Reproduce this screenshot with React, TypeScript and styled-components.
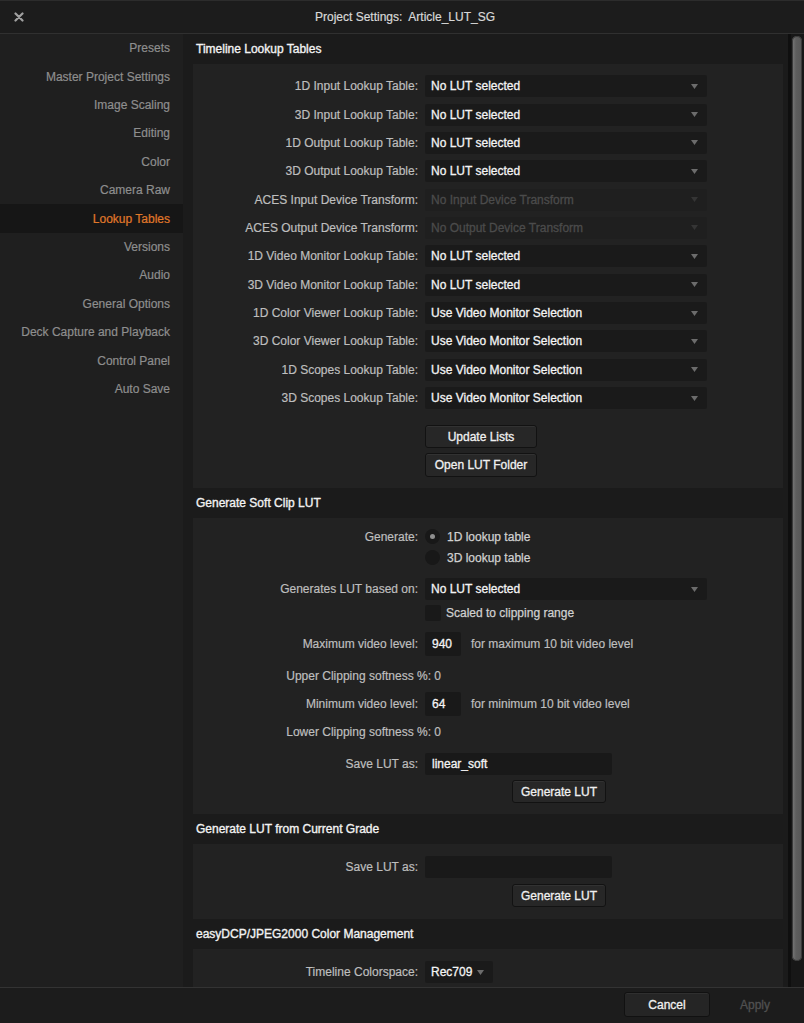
import React from 'react';
import styled, { createGlobalStyle } from 'styled-components';

const GlobalStyle = createGlobalStyle`
  html, body { margin: 0; padding: 0; background: #1b1b1b; }
  body { font-family: "Liberation Sans", Arial, Helvetica, sans-serif; font-size: 12px; }
  * { box-sizing: border-box; }
`;

const Window = styled.div`
  width: 804px;
  height: 1023px;
  display: flex;
  flex-direction: column;
  background: #1b1b1b;
  overflow: hidden;
  color: #bdbdbd;
`;

const TitleBar = styled.div`
  height: 34px;
  flex: none;
  display: grid;
  grid-template-columns: 40px 1fr 40px;
  align-items: center;
  background: #1c1c1c;
  border-top: 1px solid #2c2c2c;
  border-bottom: 1px solid #303030;
`;

const CloseButton = styled.div`
  display: flex;
  align-items: center;
  justify-content: center;
  width: 40px;
  height: 100%;
  padding-right: 2px;
`;

const Title = styled.div`
  text-align: center;
  color: #d8d8d8;
  white-space: pre;
  padding-left: 6px;
  -webkit-text-stroke: 0.2px #d8d8d8;
`;

const Body = styled.div`
  flex: 1;
  min-height: 0;
  display: flex;
`;

const Sidebar = styled.nav`
  width: 183px;
  flex: none;
  background: #1f1f1f;
  display: flex;
  flex-direction: column;
`;

const NavItem = styled.div<{ $active?: boolean }>`
  height: 28.42px;
  flex: none;
  display: flex;
  align-items: center;
  justify-content: flex-end;
  padding-right: 13px;
  color: ${(p) => (p.$active ? '#e0782a' : '#8e8e8e')};
  background: ${(p) => (p.$active ? '#161616' : 'transparent')};
  -webkit-text-stroke: 0.2px ${(p) => (p.$active ? '#e0782a' : '#8e8e8e')};
`;

const Main = styled.div`
  flex: 1;
  min-width: 0;
  display: flex;
  background: #1b1b1b;
`;

const Content = styled.div`
  flex: 1;
  min-width: 0;
  overflow: hidden;
  padding: 0 5px 0 10px;
`;

const ScrollTrack = styled.div`
  width: 16px;
  flex: none;
  background: #171717;
  border-left: 3px solid #0f0f0f;
  padding: 2px 2px 0 1px;
`;

const ScrollThumb = styled.div`
  width: 10px;
  height: 925px;
  border-radius: 5px;
  background: linear-gradient(to right, #7a7a7a, #5e5e5e 40%, #565656);
  box-shadow: inset 0 0 0 1px #3a3a3a;
`;

const SectionHeader = styled.div`
  height: 30px;
  display: flex;
  align-items: center;
  padding-left: 3px;
  color: #f2f2f2;
  -webkit-text-stroke: 0.35px #f2f2f2;
`;

const SectionBox = styled.div<{ $pt: number; $pb: number }>`
  background: #222222;
  padding: ${(p) => p.$pt}px 0 ${(p) => p.$pb}px;
  display: flex;
  flex-direction: column;
`;

const FormRow = styled.div<{ $h: number; $mt?: number }>`
  height: ${(p) => p.$h}px;
  margin-top: ${(p) => p.$mt ?? 0}px;
  flex: none;
  display: grid;
  grid-template-columns: 225px 1fr;
  column-gap: 7px;
  align-items: center;
`;

const Label = styled.div`
  text-align: right;
  white-space: nowrap;
  color: #bebebe;
  -webkit-text-stroke: 0.2px #bebebe;
`;

const WideLabel = styled(Label)`
  margin-right: -23px;
  position: relative;
`;

const Controls = styled.div`
  display: flex;
  align-items: center;
  min-width: 0;
`;

const SelectBox = styled.div<{ $w: number; $disabled?: boolean }>`
  width: ${(p) => p.$w}px;
  height: 22px;
  display: flex;
  align-items: center;
  justify-content: space-between;
  padding: 0 9px 0 6px;
  border-radius: 2px;
  background: ${(p) => (p.$disabled ? '#1f1f1f' : '#1a1a1a')};
  color: ${(p) => (p.$disabled ? '#4b4b4b' : '#f4f4f4')};
  -webkit-text-stroke: 0.3px ${(p) => (p.$disabled ? '#4b4b4b' : '#f4f4f4')};
  white-space: nowrap;
`;

const ArrowSvg = styled.svg<{ $disabled?: boolean }>`
  flex: none;
  fill: ${(p) => (p.$disabled ? '#353535' : '#6c6c6c')};
`;

const Arrow = ({ disabled }: { disabled?: boolean }) => (
  <ArrowSvg $disabled={disabled} width="7" height="5" viewBox="0 0 7 5">
    <polygon points="0,0 7,0 3.5,5" />
  </ArrowSvg>
);

const TextInput = styled.div<{ $w: number; $h: number }>`
  width: ${(p) => p.$w}px;
  height: ${(p) => p.$h}px;
  display: flex;
  align-items: center;
  padding: 0 7px;
  border-radius: 2px;
  background: #191919;
  color: #f4f4f4;
  -webkit-text-stroke: 0.3px #f4f4f4;
`;

const Hint = styled.span`
  margin-left: 10px;
  color: #bebebe;
  -webkit-text-stroke: 0.2px #bebebe;
  white-space: nowrap;
`;

const Button = styled.div<{ $w: number; $h: number }>`
  width: ${(p) => p.$w}px;
  height: ${(p) => p.$h}px;
  display: flex;
  align-items: center;
  justify-content: center;
  border-radius: 3px;
  background: #272727;
  border: 1px solid #121212;
  box-shadow: inset 0 1px 0 #323232;
  color: #f0f0f0;
  -webkit-text-stroke: 0.3px #f0f0f0;
  white-space: nowrap;
`;

const ButtonStack = styled.div`
  margin-top: 12.7px;
  display: flex;
  flex-direction: column;
  gap: 5px;
  padding-left: 232px;
`;

const ButtonRow = styled.div<{ $mt: number; $indent: number }>`
  margin-top: ${(p) => p.$mt}px;
  padding-left: ${(p) => p.$indent}px;
  display: flex;
`;

const Option = styled.div<{ $gap: number }>`
  display: flex;
  align-items: center;
  gap: ${(p) => p.$gap}px;
  color: #d0d0d0;
  -webkit-text-stroke: 0.25px #d0d0d0;
`;

const Radio = styled.span<{ $on?: boolean }>`
  width: 15px;
  height: 15px;
  border-radius: 50%;
  background: #181818;
  display: flex;
  align-items: center;
  justify-content: center;
  &::after {
    content: '';
    width: 5px;
    height: 5px;
    border-radius: 50%;
    background: ${(p) => (p.$on ? '#8e8e8e' : 'transparent')};
  }
`;

const Checkbox = styled.span`
  width: 16px;
  height: 16px;
  border-radius: 2px;
  background: #191919;
`;

const Footer = styled.div`
  height: 36px;
  flex: none;
  border-top: 1px solid #333333;
  background: #1c1c1c;
  display: flex;
  align-items: center;
  justify-content: flex-end;
  gap: 10px;
  padding-right: 14px;
  padding-bottom: 2px;
`;

const FooterButton = styled.div<{ $disabled?: boolean }>`
  width: ${(p) => (p.$disabled ? 70 : 86)}px;
  height: 25px;
  display: flex;
  align-items: center;
  justify-content: center;
  border-radius: 3px;
  background: ${(p) => (p.$disabled ? 'transparent' : '#252525')};
  border: 1px solid ${(p) => (p.$disabled ? 'transparent' : '#111111')};
  box-shadow: ${(p) => (p.$disabled ? 'none' : 'inset 0 1px 0 #2f2f2f')};
  color: ${(p) => (p.$disabled ? '#505050' : '#f0f0f0')};
  -webkit-text-stroke: 0.3px ${(p) => (p.$disabled ? '#505050' : '#f0f0f0')};
`;

const sidebarItems = [
  'Presets',
  'Master Project Settings',
  'Image Scaling',
  'Editing',
  'Color',
  'Camera Raw',
  'Lookup Tables',
  'Versions',
  'Audio',
  'General Options',
  'Deck Capture and Playback',
  'Control Panel',
  'Auto Save',
];

const lutRows: { label: string; value: string; disabled?: boolean }[] = [
  { label: '1D Input Lookup Table:', value: 'No LUT selected' },
  { label: '3D Input Lookup Table:', value: 'No LUT selected' },
  { label: '1D Output Lookup Table:', value: 'No LUT selected' },
  { label: '3D Output Lookup Table:', value: 'No LUT selected' },
  { label: 'ACES Input Device Transform:', value: 'No Input Device Transform', disabled: true },
  { label: 'ACES Output Device Transform:', value: 'No Output Device Transform', disabled: true },
  { label: '1D Video Monitor Lookup Table:', value: 'No LUT selected' },
  { label: '3D Video Monitor Lookup Table:', value: 'No LUT selected' },
  { label: '1D Color Viewer Lookup Table:', value: 'Use Video Monitor Selection' },
  { label: '3D Color Viewer Lookup Table:', value: 'Use Video Monitor Selection' },
  { label: '1D Scopes Lookup Table:', value: 'Use Video Monitor Selection' },
  { label: '3D Scopes Lookup Table:', value: 'Use Video Monitor Selection' },
];

const Select = ({ value, width, disabled }: { value: string; width: number; disabled?: boolean }) => (
  <SelectBox $w={width} $disabled={disabled}>
    <span>{value}</span>
    <Arrow disabled={disabled} />
  </SelectBox>
);

export default function App() {
  return (
    <>
      <GlobalStyle />
      <Window>
        <TitleBar>
          <CloseButton>
            <svg width="10" height="10" viewBox="0 0 10 10">
              <path d="M1.5 1.5 L8.5 8.5 M8.5 1.5 L1.5 8.5" stroke="#a0a0a0" strokeWidth="2.2" strokeLinecap="round" />
            </svg>
          </CloseButton>
          <Title>{'Project Settings:  Article_LUT_SG'}</Title>
          <div />
        </TitleBar>
        <Body>
          <Sidebar>
            {sidebarItems.map((item) => (
              <NavItem key={item} $active={item === 'Lookup Tables'}>
                {item}
              </NavItem>
            ))}
          </Sidebar>
          <Main>
            <Content>
              <SectionHeader>Timeline Lookup Tables</SectionHeader>
              <SectionBox $pt={8} $pb={11}>
                {lutRows.map((r) => (
                  <FormRow key={r.label} $h={28.36}>
                    <Label>{r.label}</Label>
                    <Controls>
                      <Select value={r.value} width={282} disabled={r.disabled} />
                    </Controls>
                  </FormRow>
                ))}
                <ButtonStack>
                  <Button $w={112} $h={23}>Update Lists</Button>
                  <Button $w={112} $h={24}>Open LUT Folder</Button>
                </ButtonStack>
              </SectionBox>

              <SectionHeader>Generate Soft Clip LUT</SectionHeader>
              <SectionBox $pt={8} $pb={11}>
                <FormRow $h={21}>
                  <Label>Generate:</Label>
                  <Controls>
                    <Option $gap={7}>
                      <Radio $on />
                      1D lookup table
                    </Option>
                  </Controls>
                </FormRow>
                <FormRow $h={21}>
                  <span />
                  <Controls>
                    <Option $gap={7}>
                      <Radio />
                      3D lookup table
                    </Option>
                  </Controls>
                </FormRow>
                <FormRow $h={22} $mt={10}>
                  <Label>Generates LUT based on:</Label>
                  <Controls>
                    <Select value="No LUT selected" width={282} />
                  </Controls>
                </FormRow>
                <FormRow $h={16} $mt={5}>
                  <span />
                  <Controls>
                    <Option $gap={5}>
                      <Checkbox />
                      Scaled to clipping range
                    </Option>
                  </Controls>
                </FormRow>
                <FormRow $h={24} $mt={11}>
                  <Label>Maximum video level:</Label>
                  <Controls>
                    <TextInput $w={36} $h={24}>940</TextInput>
                    <Hint>for maximum 10 bit video level</Hint>
                  </Controls>
                </FormRow>
                <FormRow $h={20} $mt={10}>
                  <WideLabel>Upper Clipping softness %: 0</WideLabel>
                  <span />
                </FormRow>
                <FormRow $h={24} $mt={6}>
                  <Label>Minimum video level:</Label>
                  <Controls>
                    <TextInput $w={36} $h={24}>64</TextInput>
                    <Hint>for minimum 10 bit video level</Hint>
                  </Controls>
                </FormRow>
                <FormRow $h={20} $mt={6}>
                  <WideLabel>Lower Clipping softness %: 0</WideLabel>
                  <span />
                </FormRow>
                <FormRow $h={22} $mt={11}>
                  <Label>Save LUT as:</Label>
                  <Controls>
                    <TextInput $w={187} $h={22}>linear_soft</TextInput>
                  </Controls>
                </FormRow>
                <ButtonRow $mt={5} $indent={319}>
                  <Button $w={94} $h={23}>Generate LUT</Button>
                </ButtonRow>
              </SectionBox>

              <SectionHeader>Generate LUT from Current Grade</SectionHeader>
              <SectionBox $pt={12} $pb={12}>
                <FormRow $h={22}>
                  <Label>Save LUT as:</Label>
                  <Controls>
                    <TextInput $w={187} $h={22} />
                  </Controls>
                </FormRow>
                <ButtonRow $mt={6} $indent={319}>
                  <Button $w={94} $h={23}>Generate LUT</Button>
                </ButtonRow>
              </SectionBox>

              <SectionHeader>easyDCP/JPEG2000 Color Management</SectionHeader>
              <SectionBox $pt={12} $pb={10}>
                <FormRow $h={22}>
                  <Label>Timeline Colorspace:</Label>
                  <Controls>
                    <Select value="Rec709" width={68} />
                  </Controls>
                </FormRow>
              </SectionBox>
            </Content>
            <ScrollTrack>
              <ScrollThumb />
            </ScrollTrack>
          </Main>
        </Body>
        <Footer>
          <FooterButton>Cancel</FooterButton>
          <FooterButton $disabled>Apply</FooterButton>
        </Footer>
      </Window>
    </>
  );
}
